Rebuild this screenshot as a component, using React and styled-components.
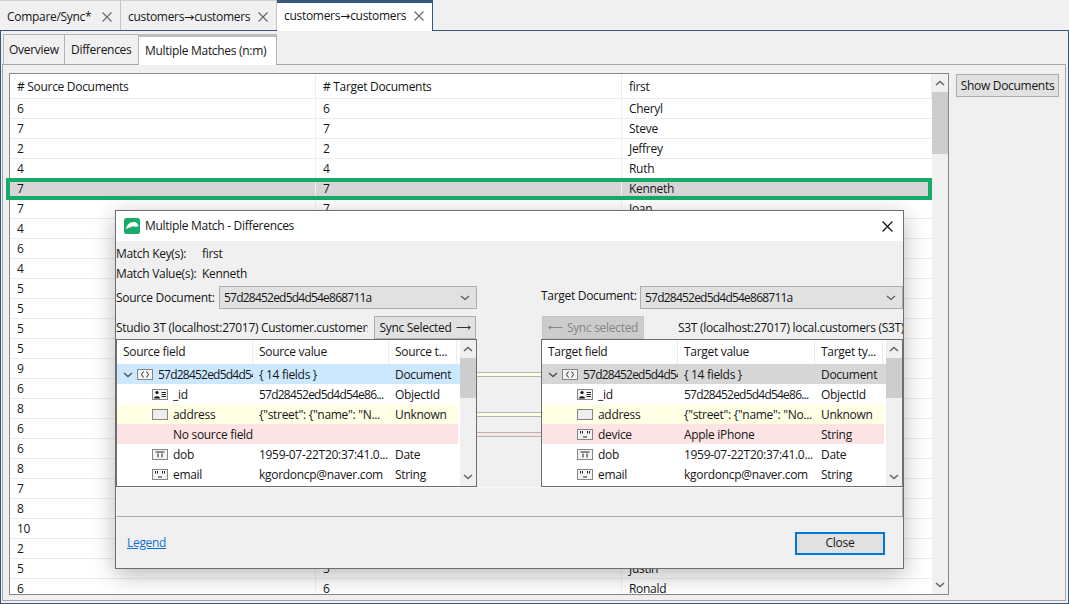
import React from "react";
import styled, { createGlobalStyle } from "styled-components";

const Global = createGlobalStyle`
  html, body { margin: 0; padding: 0; background: #f0f0f0; }
  * { box-sizing: border-box; }
`;

const Frame = styled.div`
  position: relative;
  width: 1069px;
  height: 604px;
  overflow: hidden;
  background: #f0f0f0;
  color: #161616;
  font-family: "Open Sans", sans-serif;
  font-size: 12px;
  letter-spacing: -0.3px;
  line-height: 16px;
`;
const TabBar = styled.div`
  display: flex;
  height: 30px;
`;
const Tab = styled.div`
  position: relative;
  z-index: 1;
  display: flex;
  align-items: center;
  justify-content: space-between;
  width: ${(p) => p.$w}px;
  height: ${(p) => (p.$active ? 31 : 30)}px;
  padding: ${(p) => (p.$active ? "0 8px 2px 7px" : "2px 8px 0 7px")};
  background: ${(p) => (p.$active ? "#fff" : "#f0f0f0")};
  border-top: ${(p) => (p.$active ? "3px solid #37587c" : "1px solid #d0d0d0")};
  border-right: 1px solid ${(p) => (p.$active ? "#37587c" : "#c4c4c4")};
`;
const ArrowGlyph = styled.span`
  font-family: "DejaVu Sans", sans-serif;
  letter-spacing: 0;
`;
const Content = styled.div`
  display: flex;
  flex-direction: column;
  height: 574px;
  padding: 3px 2px 2px 1px;
  border: 1px solid #37587c;
`;
const SubTabs = styled.div`
  position: relative;
  z-index: 1;
  display: flex;
  height: 30px;
  padding-left: 1px;
`;
const SubTab = styled.div`
  display: flex;
  align-items: center;
  width: ${(p) => p.$w}px;
  height: ${(p) => (p.$active ? 31 : 30)}px;
  padding-left: ${(p) => (p.$first ? 5 : 6)}px;
  background: ${(p) => (p.$active ? "#fff" : "#f0f0f0")};
  border-top: ${(p) => (p.$active ? "3px solid #bdbdbd" : "1px solid #b4b4b4")};
  border-right: 1px solid #b4b4b4;
  border-left: ${(p) => (p.$first ? "1px solid #b4b4b4" : "0")};
`;
const Panel = styled.div`
  flex: 1;
  display: flex;
  gap: 7px;
  align-items: flex-start;
  padding: 8px 6px 5px 6px;
  border: 1px solid #a6a6a6;
`;
const TableBox = styled.div`
  display: flex;
  width: 940px;
  height: 522px;
  overflow: hidden;
  border: 1px solid #85898d;
  background: #fff;
`;
const TableBody = styled.div`
  width: 922px;
  overflow: hidden;
`;
const HeadRow = styled.div`
  display: grid;
  grid-template-columns: 306px 306px 310px;
  height: 24px;
`;
const HeadCell = styled.div`
  display: flex;
  align-items: center;
  padding: 1px 0 0 7px;
  border-right: 1px solid #ececec;
`;
const Row = styled.div`
  display: grid;
  grid-template-columns: 306px 306px 310px;
  height: 20px;
  border-top: 1px solid #ececec;
  background: ${(p) => (p.$selected ? "#d6d6d6" : "#fff")};
`;
const Cell = styled.div`
  padding: 2px 0 0 7px;
  border-left: ${(p) => (p.$first ? "0" : "1px solid #f1f1f1")};
  margin-left: ${(p) => (p.$first ? "0" : "-1px")};
  white-space: nowrap;
`;
const ScrollBar = styled.div`
  display: flex;
  flex-direction: column;
  flex: none;
  width: ${(p) => p.$w}px;
  background: #f0f0f0;
  margin-left: ${(p) => p.$gap || 0}px;
`;
const ScrollArrow = styled.div`
  display: flex;
  align-items: center;
  justify-content: center;
  height: 18px;
  margin-top: ${(p) => (p.$end ? "auto" : "0")};
`;
const ScrollThumb = styled.div`
  height: ${(p) => p.$h}px;
  background: #cdcdcd;
`;
const ShowButton = styled.button`
  width: 103px;
  height: 23px;
  margin-top: 1px;
  padding: 0;
  border: 1px solid #adadad;
  background: #e1e1e1;
  color: inherit;
  font: inherit;
  letter-spacing: inherit;
`;
const GreenMark = styled.div`
  position: absolute;
  left: 6px;
  top: 178px;
  width: 926px;
  height: 22px;
  border: 4px solid #17ab6b;
`;
const Dialog = styled.div`
  position: absolute;
  left: 115px;
  top: 210px;
  width: 789px;
  height: 359px;
  border: 1px solid #6e6e6e;
  background: #f0f0f0;
  box-shadow: 0 6px 22px rgba(0, 0, 0, 0.28);
`;
const TitleBar = styled.div`
  display: flex;
  align-items: center;
  height: 30px;
  padding: 0 10px 0 8px;
  background: #fff;
`;
const Title = styled.div`
  flex: 1;
  margin-left: 5px;
`;
const Meta = styled.div`
  display: grid;
  grid-template-columns: 86px 1fr;
  grid-auto-rows: 20px;
  align-items: center;
  padding-top: 3px;
  margin-bottom: 2px;
`;
const Compare = styled.div`
  display: grid;
  grid-template-columns: 361px 64px 362px;
`;
const Side = styled.div`
  display: flex;
  flex-direction: column;
`;
const SelectRow = styled.div`
  display: flex;
  align-items: center;
  height: 23px;
  margin-bottom: 7px;
`;
const SelectLabel = styled.div`
  flex: none;
  width: ${(p) => p.$w}px;
  margin-top: ${(p) => p.$nudge || 0}px;
  white-space: nowrap;
`;
const SelectBox = styled.div`
  flex: none;
  display: flex;
  align-items: center;
  justify-content: space-between;
  width: ${(p) => p.$w}px;
  height: 23px;
  padding: 1px 6px 0 4px;
  border: 1px solid #adadad;
  background: #e1e1e1;
`;
const IdText = styled.span`
  letter-spacing: -0.78px;
`;
const SyncRow = styled.div`
  display: flex;
  align-items: center;
  height: 23px;
`;
const SyncLabel = styled.div`
  flex: none;
  width: ${(p) => p.$w}px;
  margin-left: ${(p) => p.$ml || 0}px;
  margin-right: ${(p) => p.$mr || 0}px;
  overflow: hidden;
  white-space: nowrap;
`;
const SyncButton = styled.div`
  flex: none;
  display: flex;
  align-items: center;
  justify-content: center;
  gap: 4px;
  width: 102px;
  height: 23px;
  margin-left: ${(p) => p.$ml || 0}px;
  border: 1px solid ${(p) => (p.$disabled ? "#c4c4c4" : "#adadad")};
  background: ${(p) => (p.$disabled ? "#cccccc" : "#e1e1e1")};
  color: ${(p) => (p.$disabled ? "#858585" : "inherit")};
`;
const Tree = styled.div`
  display: flex;
  height: 148px;
  border: 1px solid #6e6e6e;
  background: #fff;
  overflow: hidden;
`;
const TreeBody = styled.div`
  flex: none;
  width: ${(p) => p.$w}px;
`;
const TreeHead = styled.div`
  display: grid;
  grid-template-columns: 136px ${(p) => p.$mid}px 68px;
  height: 24px;
`;
const TreeHeadCell = styled.div`
  display: flex;
  align-items: center;
  padding-left: 6px;
  border-right: 1px solid #ececec;
  white-space: nowrap;
`;
const TreeRow = styled.div`
  display: grid;
  grid-template-columns: 136px ${(p) => p.$mid}px 1fr;
  align-items: center;
  height: 20px;
  padding-top: 1px;
  width: ${(p) => (p.$root ? "calc(100% + 2px)" : "100%")};
  background: ${(p) => p.$bg || "#fff"};
`;
const NameCell = styled.div`
  display: flex;
  align-items: center;
  height: 19px;
  padding-left: ${(p) => (p.$root ? 5 : 35)}px;
  overflow: hidden;
  white-space: nowrap;
`;
const Toggle = styled.span`
  flex: none;
  display: flex;
  width: 15px;
  padding-left: 1px;
`;
const NameText = styled.span`
  margin-left: ${(p) => (p.$noIcon ? 21 : 5)}px;
  flex: none;
`;
const ValueCell = styled.div`
  padding-left: 6px;
  white-space: nowrap;
  overflow: hidden;
`;
const Connectors = styled.svg`
  display: block;
  margin-top: 86px;
`;
const StatusBox = styled.div`
  height: 30px;
  border: 1px solid #a8a8a8;
  border-top-color: #f8f8f8;
  border-left-color: #f8f8f8;
`;
const Footer = styled.div`
  display: flex;
  align-items: center;
  justify-content: space-between;
  height: 50px;
  padding: 2px 18px 0 11px;
`;
const LegendLink = styled.a`
  color: #0f6fd8;
  text-decoration: underline;
`;
const CloseButton = styled.div`
  display: flex;
  align-items: center;
  justify-content: center;
  width: 90px;
  height: 23px;
  border: 2px solid #0078d7;
  background: #e1e1e1;
`;
const Svg = styled.svg`
  flex: none;
  display: block;
`;

const X = ({ size = 10, color = "#666" }) => (
  <Svg width={size} height={size} viewBox="0 0 10 10">
    <path d="M0.5 0.5L9.5 9.5M9.5 0.5L0.5 9.5" stroke={color} strokeWidth="1.1" fill="none" />
  </Svg>
);
const Chevron = ({ up, color = "#666", w = 1.6 }) => (
  <Svg width="10" height="6" viewBox="0 0 10 6">
    <path d={up ? "M1 5L5 1.5L9 5" : "M1 1L5 4.5L9 1"} stroke={color} strokeWidth={w} fill="none" />
  </Svg>
);
const Arrow = ({ left, color = "#333" }) => (
  <Svg width="15" height="5" viewBox="0 0 15 5">
    {left ? (
      <path d="M14.5 2.5H1M3 .8L.6 2.5L3 4.2" stroke={color} fill="none" />
    ) : (
      <path d="M.5 2.5H14M12 .8L14.4 2.5L12 4.2" stroke={color} fill="none" />
    )}
  </Svg>
);
const Logo = () => (
  <Svg width="16" height="16" viewBox="0 0 16 16">
    <rect width="16" height="16" rx="2.5" fill="#17ab6b" />
    <path d="M2 11.5C2.5 7 5.5 4 9.5 4C12.5 4 14.5 6 14.5 9C13.6 8 12.6 8 12 9.5C11.4 8.2 10 8 9 9C8 8.2 7 8.4 6.2 9.5C5 9.3 3.4 10 2 11.5Z" fill="#fff" />
  </Svg>
);
const FieldIcon = ({ kind }) => (
  <Svg width="16" height="11" viewBox="0 0 16 11">
    <rect x=".5" y=".5" width="15" height="10" fill={kind === "unknown" ? "#eeeeee" : "#f4f4f4"} stroke="#858585" />
    {kind === "doc" && <path d="M6.5 2.5L4.5 5.5L6.5 8.5M9.5 2.5L11.5 5.5L9.5 8.5" stroke="#222" fill="none" />}
    {kind === "id" && (
      <g>
        <circle cx="5" cy="3.5" r="1.6" fill="#111" />
        <path d="M2 9.5C2 6.5 8 6.5 8 9.5Z" fill="#111" />
        <path d="M9.5 3.5H14M9.5 5.5H14M9.5 7.5H14" stroke="#222" />
      </g>
    )}
    {kind === "date" && <path d="M3.5 3H12.5M6 4.5V8.5M10 4.5V8.5" stroke="#222" fill="none" />}
    {kind === "string" && <path d="M3.5 2V4.5M5.5 2V4.5M10.5 2V4.5M12.5 2V4.5M6 8H10" stroke="#222" fill="none" />}
  </Svg>
);

const Bar = ({ w, thumb, gap }) => (
  <ScrollBar $w={w} $gap={gap}>
    <ScrollArrow><Chevron up /></ScrollArrow>
    <ScrollThumb $h={thumb} />
    <ScrollArrow $end><Chevron /></ScrollArrow>
  </ScrollBar>
);

const rows = [
  ["6", "6", "Cheryl"], ["7", "7", "Steve"], ["2", "2", "Jeffrey"], ["4", "4", "Ruth"],
  ["7", "7", "Kenneth"], ["7", "7", "Joan"], ["4"], ["6"], ["4"], ["5"], ["5"], ["5"], ["5"],
  ["9"], ["6"], ["8"], ["6"], ["6"], ["8"], ["7"], ["8"], ["10"], ["2"],
  ["5", "5", "Justin"], ["6", "6", "Ronald"],
];

const DOC_ID = "57d28452ed5d4d54e868711a";

const TreePane = ({ heads, width, mid, rootBg, missing, street }) => (
  <Tree>
    <TreeBody $w={width}>
      <TreeHead $mid={mid}>
        {heads.map((h) => <TreeHeadCell key={h}>{h}</TreeHeadCell>)}
      </TreeHead>
      <TreeRow $root $mid={mid} $bg={rootBg}>
        <NameCell $root>
          <Toggle><Chevron color="#555" /></Toggle>
          <FieldIcon kind="doc" />
          <NameText><IdText>{DOC_ID}</IdText></NameText>
        </NameCell>
        <ValueCell>{"{ 14 fields }"}</ValueCell>
        <ValueCell>Document</ValueCell>
      </TreeRow>
      <TreeRow $mid={mid}>
        <NameCell><FieldIcon kind="id" /><NameText>_id</NameText></NameCell>
        <ValueCell><IdText>57d28452ed5d4d54e86...</IdText></ValueCell>
        <ValueCell>ObjectId</ValueCell>
      </TreeRow>
      <TreeRow $mid={mid} $bg="#ffffe6">
        <NameCell><FieldIcon kind="unknown" /><NameText>address</NameText></NameCell>
        <ValueCell>{street}</ValueCell>
        <ValueCell>Unknown</ValueCell>
      </TreeRow>
      <TreeRow $mid={mid} $bg="#fde4e4">
        {missing ? (
          <NameCell><NameText $noIcon>No source field</NameText></NameCell>
        ) : (
          <NameCell><FieldIcon kind="string" /><NameText>device</NameText></NameCell>
        )}
        <ValueCell>{missing ? "" : "Apple iPhone"}</ValueCell>
        <ValueCell>{missing ? "" : "String"}</ValueCell>
      </TreeRow>
      <TreeRow $mid={mid}>
        <NameCell><FieldIcon kind="date" /><NameText>dob</NameText></NameCell>
        <ValueCell>1959-07-22T20:37:41.0...</ValueCell>
        <ValueCell>Date</ValueCell>
      </TreeRow>
      <TreeRow $mid={mid}>
        <NameCell><FieldIcon kind="string" /><NameText>email</NameText></NameCell>
        <ValueCell>kgordoncp@naver.com</ValueCell>
        <ValueCell>String</ValueCell>
      </TreeRow>
    </TreeBody>
    <Bar w={16} thumb={40} gap={2} />
  </Tree>
);

const link = (y, fill) => (
  <g key={y}>
    <rect x="0" y={y} width="64" height="5" fill="#b4b4b4" />
    <rect x="0" y={y + 1} width="64" height="3" fill={fill} />
  </g>
);

export default function App() {
  return (
    <Frame>
      <Global />
      <TabBar>
        <Tab $w={121}>Compare/Sync*<X /></Tab>
        <Tab $w={156}><span>customers<ArrowGlyph>→</ArrowGlyph>customers</span><X /></Tab>
        <Tab $w={156} $active><span>customers<ArrowGlyph>→</ArrowGlyph>customers</span><X /></Tab>
      </TabBar>
      <Content>
        <SubTabs>
          <SubTab $w={62} $first>Overview</SubTab>
          <SubTab $w={74}>Differences</SubTab>
          <SubTab $w={138} $active>Multiple Matches (n:m)</SubTab>
        </SubTabs>
        <Panel>
          <TableBox>
            <TableBody>
              <HeadRow>
                <HeadCell># Source Documents</HeadCell>
                <HeadCell># Target Documents</HeadCell>
                <HeadCell>first</HeadCell>
              </HeadRow>
              {rows.map((r, i) => (
                <Row key={i} $selected={i === 4}>
                  <Cell $first>{r[0]}</Cell>
                  <Cell>{r[1]}</Cell>
                  <Cell>{r[2]}</Cell>
                </Row>
              ))}
            </TableBody>
            <Bar w={16} thumb={62} />
          </TableBox>
          <ShowButton>Show Documents</ShowButton>
        </Panel>
      </Content>
      <GreenMark />
      <Dialog>
        <TitleBar>
          <Logo />
          <Title>Multiple Match - Differences</Title>
          <X size={11} color="#111" />
        </TitleBar>
        <Meta>
          <div>Match Key(s):</div><div>first</div>
          <div>Match Value(s):</div><div>Kenneth</div>
        </Meta>
        <Compare>
          <Side>
            <SelectRow>
              <SelectLabel $w={103}>Source Document:</SelectLabel>
              <SelectBox $w={258}><IdText>{DOC_ID}</IdText><Chevron color="#555" w={1.2} /></SelectBox>
            </SelectRow>
            <SyncRow>
              <SyncLabel $w={252} $mr={6}>Studio 3T (localhost:27017) Customer.customers</SyncLabel>
              <SyncButton>Sync Selected <Arrow /></SyncButton>
            </SyncRow>
            <TreePane
              heads={["Source field", "Source value", "Source t..."]}
              width={341}
              mid={136}
              street={'{"street": {"name": "N...'}
              rootBg="#cce8ff"
              missing
            />
          </Side>
          <Connectors width="64" height="65" viewBox="0 0 64 65">
            {link(0, "#ffffe6")}{link(40, "#ffffe6")}{link(60, "#fde4e4")}
          </Connectors>
          <Side>
            <SelectRow>
              <SelectLabel $w={99} $nudge={-4}>Target Document:</SelectLabel>
              <SelectBox $w={263}><IdText>{DOC_ID}</IdText><Chevron color="#555" w={1.2} /></SelectBox>
            </SelectRow>
            <SyncRow>
              <SyncButton $disabled $ml={1}><Arrow left color="#858585" /> Sync selected</SyncButton>
              <SyncLabel $w={225} $ml={34}>S3T (localhost:27017) local.customers (S3T)</SyncLabel>
            </SyncRow>
            <TreePane
              heads={["Target field", "Target value", "Target ty..."]}
              width={342}
              mid={137}
              street={'{"street": {"name": "No...'}
              rootBg="#d6d6d6"
            />
          </Side>
        </Compare>
        <StatusBox />
        <Footer>
          <LegendLink>Legend</LegendLink>
          <CloseButton>Close</CloseButton>
        </Footer>
      </Dialog>
    </Frame>
  );
}
